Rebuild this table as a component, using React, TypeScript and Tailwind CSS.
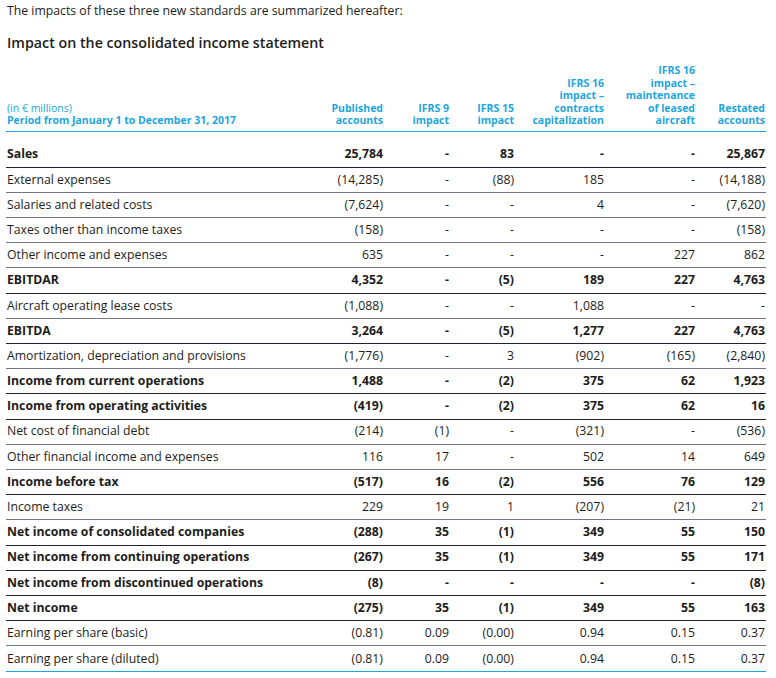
const rows: { label: string; v: string[]; bold?: boolean }[] = [
  { label: 'Sales', v: ['25,784', '-', '83', '-', '-', '25,867'], bold: true },
  { label: 'External expenses', v: ['(14,285)', '-', '(88)', '185', '-', '(14,188)'] },
  { label: 'Salaries and related costs', v: ['(7,624)', '-', '-', '4', '-', '(7,620)'] },
  { label: 'Taxes other than income taxes', v: ['(158)', '-', '-', '-', '-', '(158)'] },
  { label: 'Other income and expenses', v: ['635', '-', '-', '-', '227', '862'] },
  { label: 'EBITDAR', v: ['4,352', '-', '(5)', '189', '227', '4,763'], bold: true },
  { label: 'Aircraft operating lease costs', v: ['(1,088)', '-', '-', '1,088', '-', '-'] },
  { label: 'EBITDA', v: ['3,264', '-', '(5)', '1,277', '227', '4,763'], bold: true },
  { label: 'Amortization, depreciation and provisions', v: ['(1,776)', '-', '3', '(902)', '(165)', '(2,840)'] },
  { label: 'Income from current operations', v: ['1,488', '-', '(2)', '375', '62', '1,923'], bold: true },
  { label: 'Income from operating activities', v: ['(419)', '-', '(2)', '375', '62', '16'], bold: true },
  { label: 'Net cost of financial debt', v: ['(214)', '(1)', '-', '(321)', '-', '(536)'] },
  { label: 'Other financial income and expenses', v: ['116', '17', '-', '502', '14', '649'] },
  { label: 'Income before tax', v: ['(517)', '16', '(2)', '556', '76', '129'], bold: true },
  { label: 'Income taxes', v: ['229', '19', '1', '(207)', '(21)', '21'] },
  { label: 'Net income of consolidated companies', v: ['(288)', '35', '(1)', '349', '55', '150'], bold: true },
  { label: 'Net income from continuing operations', v: ['(267)', '35', '(1)', '349', '55', '171'], bold: true },
  { label: 'Net income from discontinued operations', v: ['(8)', '-', '-', '-', '-', '(8)'], bold: true },
  { label: 'Net income', v: ['(275)', '35', '(1)', '349', '55', '163'], bold: true },
  { label: 'Earning per share (basic)', v: ['(0.81)', '0.09', '(0.00)', '0.94', '0.15', '0.37'] },
  { label: 'Earning per share (diluted)', v: ['(0.81)', '0.09', '(0.00)', '0.94', '0.15', '0.37'] },
];

const headers: string[][] = [
  ['Published', 'accounts'],
  ['IFRS 9', 'impact'],
  ['IFRS 15', 'impact'],
  ['IFRS 16', 'impact –', 'contracts', 'capitalization'],
  ['IFRS 16', 'impact –', 'maintenance', 'of leased', 'aircraft'],
  ['Restated', 'accounts'],
];

const grid = 'grid grid-cols-[304px_73px_66px_65px_90px_91px_70px]';

export default function App() {
  return (
    <div className="w-[776px] h-[678px] bg-white text-[#1d1d1b] font-['Open_Sans',sans-serif] pl-[6px] pr-[10px]">
      <div className="pt-[3px] text-[12.25px] leading-[16px] pl-[1px]">
        The impacts of these three new standards are summarized hereafter:
      </div>
      <div className="mt-[15px] text-[14.25px] leading-[18px] font-semibold pl-[1px]">
        Impact on the consolidated income statement
      </div>
      <div className={`${grid} mt-[12px] border-b border-[#1ba6e0] pb-[4px] items-end text-[#1ba6e0] text-[10.5px] leading-[12.5px]`}>
        <div className="pl-[1px]">
          <div>(in € millions)</div>
          <div className="font-bold">Period from January 1 to December 31, 2017</div>
        </div>
        {headers.map((h, i) => (
          <div key={i} className="text-right font-bold">
            {h.map((l) => (
              <div key={l}>{l}</div>
            ))}
          </div>
        ))}
      </div>
      <div className="pt-[11px] border-b border-[#1ba6e0]">
        {rows.map((r, i) => (
          <div
            key={r.label}
            className={`${grid} h-[25.2px] items-center text-[12.25px] ${
              i === rows.length - 1 ? '' : 'border-b'
            } ${r.bold ? 'font-bold border-[#1f2236]' : 'border-[#6f7788]'}`}
          >
            <div className="pl-[1px]">{r.label}</div>
            {r.v.map((v, j) => (
              <div key={j} className="text-right">
                {v}
              </div>
            ))}
          </div>
        ))}
      </div>
    </div>
  );
}
